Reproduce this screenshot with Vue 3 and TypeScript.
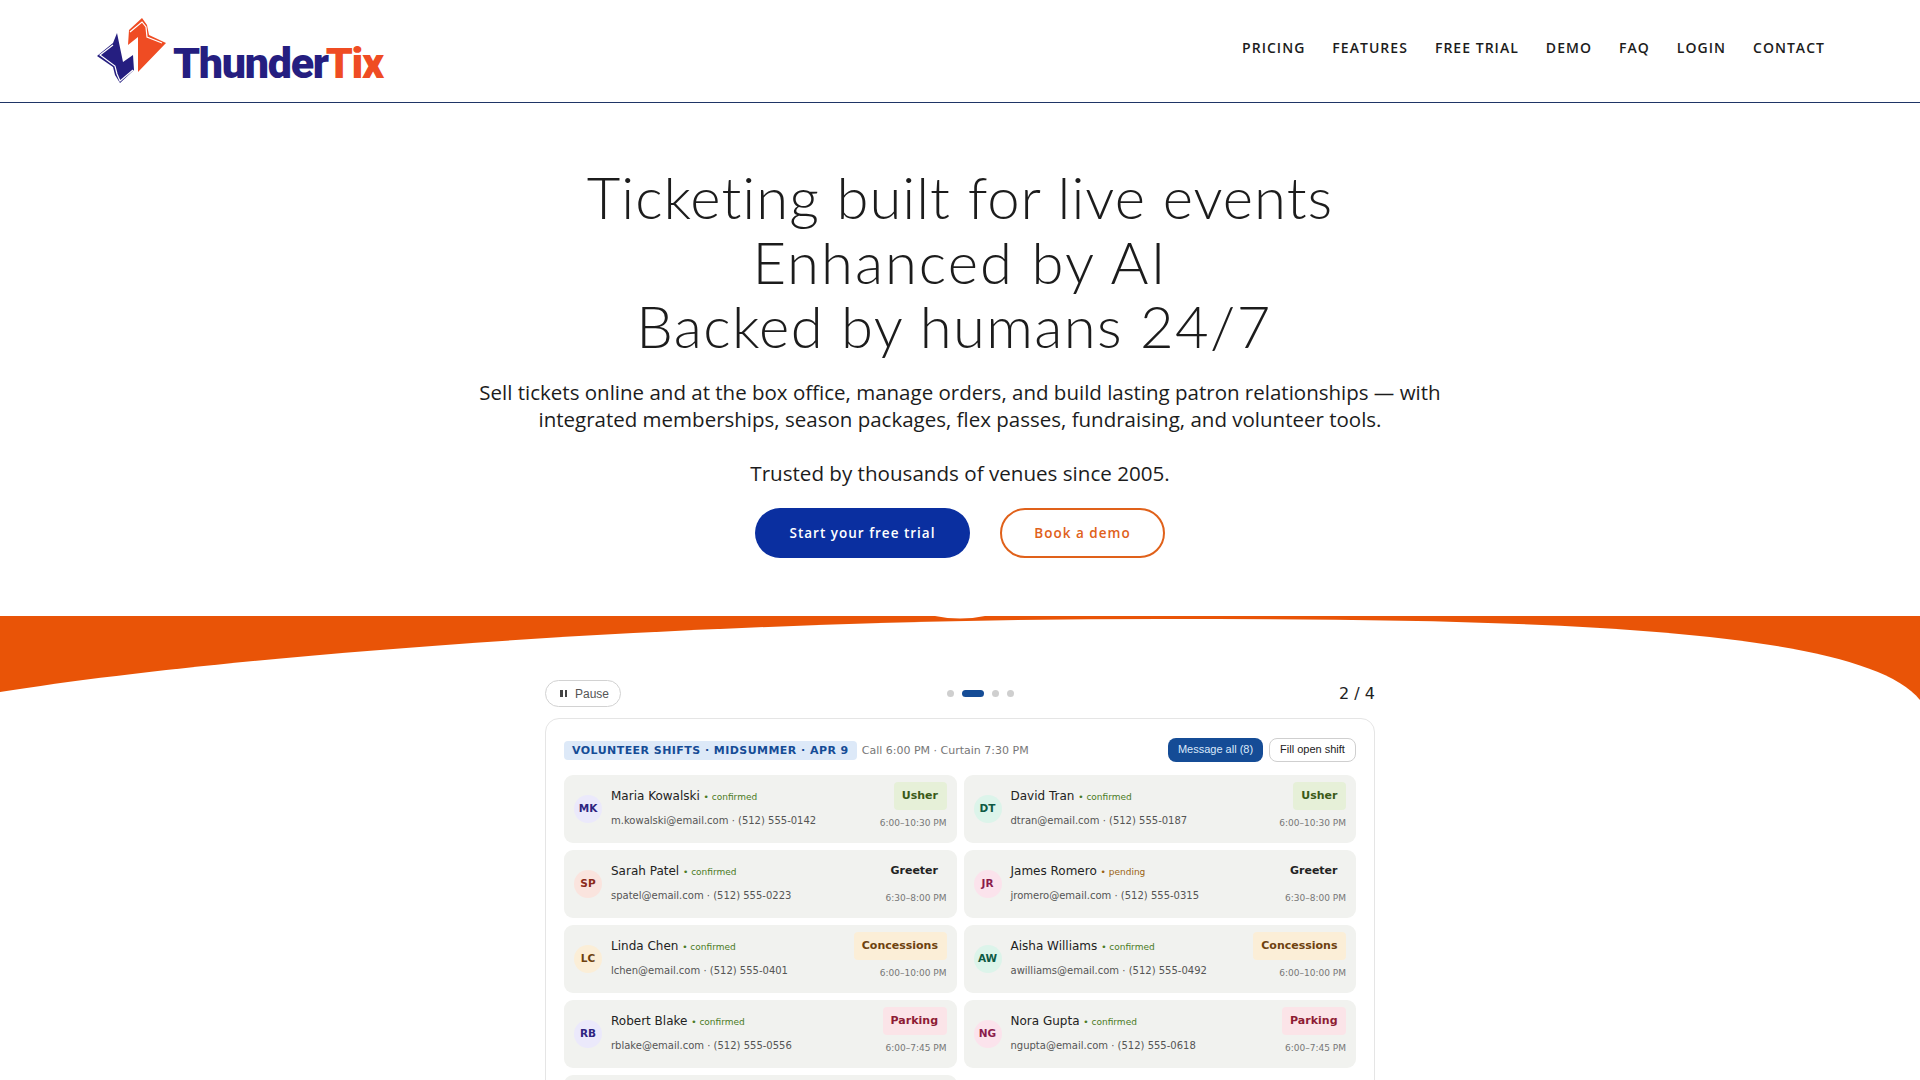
<script setup lang="ts">
interface Shift {
  initials: string
  name: string
  status: string
  contact: string
  role: string
  time: string
  tone: string
  avatar: string
}

const nav: string[] = ['PRICING', 'FEATURES', 'FREE TRIAL', 'DEMO', 'FAQ', 'LOGIN', 'CONTACT']

const shifts: Shift[] = [
  { initials: 'MK', name: 'Maria Kowalski', status: 'confirmed', contact: 'm.kowalski@email.com · (512) 555-0142', role: 'Usher', time: '6:00–10:30 PM', tone: 'usher', avatar: 'violet' },
  { initials: 'DT', name: 'David Tran', status: 'confirmed', contact: 'dtran@email.com · (512) 555-0187', role: 'Usher', time: '6:00–10:30 PM', tone: 'usher', avatar: 'mint' },
  { initials: 'SP', name: 'Sarah Patel', status: 'confirmed', contact: 'spatel@email.com · (512) 555-0223', role: 'Greeter', time: '6:30–8:00 PM', tone: 'greeter', avatar: 'coral' },
  { initials: 'JR', name: 'James Romero', status: 'pending', contact: 'jromero@email.com · (512) 555-0315', role: 'Greeter', time: '6:30–8:00 PM', tone: 'greeter', avatar: 'pink' },
  { initials: 'LC', name: 'Linda Chen', status: 'confirmed', contact: 'lchen@email.com · (512) 555-0401', role: 'Concessions', time: '6:00–10:00 PM', tone: 'concessions', avatar: 'sand' },
  { initials: 'AW', name: 'Aisha Williams', status: 'confirmed', contact: 'awilliams@email.com · (512) 555-0492', role: 'Concessions', time: '6:00–10:00 PM', tone: 'concessions', avatar: 'mint' },
  { initials: 'RB', name: 'Robert Blake', status: 'confirmed', contact: 'rblake@email.com · (512) 555-0556', role: 'Parking', time: '6:00–7:45 PM', tone: 'parking', avatar: 'violet' },
  { initials: 'NG', name: 'Nora Gupta', status: 'confirmed', contact: 'ngupta@email.com · (512) 555-0618', role: 'Parking', time: '6:00–7:45 PM', tone: 'parking', avatar: 'pink' },
]
</script>

<template>
  <div class="page">
    <header class="header">
      <a class="logo" href="#">
        <svg class="mark" viewBox="0 0 70 67" width="70" height="67" aria-hidden="true">
          <path d="M32 13 L45 1 L50 8 L52 18 L69 26 L41 55 L41 20 L31 28 Z" fill="#ef4c23"/>
          <path d="M33 15 L45 5 L49 10 L50 20 L65 26" fill="none" stroke="#fff" stroke-width="1.2"/>
          <path d="M20 16 L26 45 L36 38 L37 53 L23 66 L18 58 L16 50 L0 39 L16 26 Z" fill="#251e80"/>
          <path d="M16 28 L3 38 L18 49 L20 57 L23 64 L36 53" fill="none" stroke="#fff" stroke-width="1.2"/>
        </svg>
        <span class="word">Thunder<span class="word-accent">Tix</span></span>
      </a>
      <nav class="nav">
        <a v-for="item in nav" :key="item" href="#">{{ item }}</a>
      </nav>
    </header>

    <section class="hero">
      <h1>
        <span class="line">Ticketing built for live events</span>
        <span class="line second">Enhanced by AI</span>
        <span class="line third">Backed by humans 24/7</span>
      </h1>
      <p class="lead">Sell tickets online and at the box office, manage orders, and build lasting patron relationships — with<br />integrated memberships, season packages, flex passes, fundraising, and volunteer tools.</p>
      <p class="trust">Trusted by thousands of venues since 2005.</p>
      <div class="cta">
        <a class="btn primary" href="#">Start your free trial</a>
        <a class="btn outline" href="#">Book a demo</a>
      </div>
    </section>

    <section class="showcase">
      <svg class="wave" viewBox="0 0 1920 90" preserveAspectRatio="none" aria-hidden="true">
        <rect width="1920" height="90" fill="#e95407"/>
        <path d="M0 76 C240 38 700 3 1160 3 C1500 3 1860 8 1920 84 L1920 90 L0 90 Z" fill="#fff"/>
        <path d="M935 0 Q960 5 985 0 Z" fill="#fff"/>
      </svg>
      <div class="carousel">
        <div class="controls">
          <button class="pause"><span class="bars"><i></i><i></i></span>Pause</button>
          <div class="dots">
            <span class="dot"></span><span class="dot on"></span><span class="dot"></span><span class="dot"></span>
          </div>
          <span class="count">2 / 4</span>
        </div>
        <div class="card">
          <div class="card-head">
            <span class="tag">VOLUNTEER SHIFTS · MIDSUMMER · APR 9</span>
            <span class="call">Call 6:00 PM · Curtain 7:30 PM</span>
            <button class="act fill">Message all (8)</button>
            <button class="act ghost">Fill open shift</button>
          </div>
          <div class="grid">
            <div v-for="s in shifts" :key="s.initials" class="row">
              <span class="avatar" :class="s.avatar">{{ s.initials }}</span>
              <div class="info">
                <div class="name">{{ s.name }} <span class="status" :class="s.status">• {{ s.status }}</span></div>
                <div class="contact">{{ s.contact }}</div>
              </div>
              <div class="side">
                <span class="role" :class="s.tone">{{ s.role }}</span>
                <span class="time">{{ s.time }}</span>
              </div>
            </div>
            <div class="row"></div>
          </div>
        </div>
      </div>
    </section>
  </div>
</template>

<style>
html, body { margin: 0; background: #fff; }
</style>

<style scoped>
.page { height: 1080px; overflow: hidden; background: #fff; font-family: "Open Sans", sans-serif; color: #1c1c1c; }
a { text-decoration: none; }

.header { height: 103px; box-sizing: border-box; border-bottom: 1px solid #1f3566; display: flex; align-items: flex-start; justify-content: space-between; padding: 0 95px 0 97px; }
.logo { display: flex; align-items: flex-start; margin-top: 17px; }
.mark { display: block; }
.word { font-family: Roboto, sans-serif; font-weight: 900; font-size: 43px; line-height: 1; color: #251e80; letter-spacing: -1.3px; margin: 25px 0 0 6px; }
.word-accent { color: #ef4c23; margin-left: -2px; }
.nav { display: flex; gap: 27px; margin-top: 38px; }
.nav a { color: #1c1c1c; font-size: 14px; font-weight: 600; letter-spacing: 1.03px; line-height: 20px; white-space: nowrap; }

.hero { display: flex; flex-direction: column; align-items: center; text-align: center; padding-top: 62px; height: 513px; box-sizing: border-box; }
h1 { margin: 0; font-family: Lato, sans-serif; font-weight: 300; font-size: 58px; line-height: 64.5px; letter-spacing: 1px; color: #1c1c1c; }
.line { display: block; }
.second { letter-spacing: 2px; }
.third { letter-spacing: 1.35px; padding-right: 12px; }
.lead { margin: 20px 0 0; font-size: 20.5px; line-height: 27px; }
.trust { margin: 27px 0 0; font-size: 20.6px; line-height: 27px; }
.cta { display: flex; gap: 30px; margin-top: 21px; }
.btn { box-sizing: border-box; height: 50px; border-radius: 25px; display: flex; align-items: center; justify-content: center; font-size: 13.5px; font-weight: 600; letter-spacing: 1px; }
.primary { width: 215px; background: #0a2fa0; color: #fff; }
.outline { width: 165px; border: 2px solid #e0611a; color: #e0611a; }

.showcase { position: relative; height: 464px; padding-top: 64px; box-sizing: border-box; }
.wave { position: absolute; left: 0; top: 0; width: 100%; height: 90px; display: block; }
.carousel { position: relative; width: 830px; margin: 0 auto; }
.controls { display: flex; justify-content: space-between; align-items: center; height: 27px; }
.pause { width: 76px; height: 27px; box-sizing: border-box; border: 1px solid #d2d2d2; border-radius: 14px; background: #fff; display: flex; align-items: center; gap: 8px; font-family: "Liberation Sans", sans-serif; font-size: 12px; color: #555; padding: 0 0 0 14px; }
.bars { display: flex; gap: 2px; }
.bars i { width: 2.5px; height: 7px; background: #444; display: block; }
.dots { display: flex; align-items: center; gap: 8px; }
.dot { width: 7px; height: 7px; border-radius: 50%; background: #cfcfcf; }
.dot.on { width: 22px; height: 7px; border-radius: 4px; background: #154c96; }
.count { font-family: "DejaVu Sans", sans-serif; font-size: 16px; color: #222; }

.card { margin-top: 11px; height: 480px; box-sizing: border-box; border: 1px solid #e5e5e5; border-radius: 14px; padding: 19px 18px 0; background: #fff; font-family: "DejaVu Sans", sans-serif; }
.card-head { display: flex; align-items: center; height: 24px; margin-bottom: 13px; }
.tag { background: #dde9f8; color: #154c96; font-size: 11px; font-weight: 700; letter-spacing: 0.45px; line-height: 19px; padding: 0 8px; border-radius: 4px; white-space: nowrap; }
.call { margin-left: 5px; font-size: 11px; color: #777; flex: 1; white-space: nowrap; }
.act { font-family: "Liberation Sans", sans-serif; font-size: 11px; height: 24px; box-sizing: border-box; border-radius: 8px; padding: 0 0 2px; }
.fill { width: 95px; background: #154c96; color: #dbe9fb; border: 0; }
.ghost { width: 87px; margin-left: 6px; background: #fff; color: #222; border: 1px solid #cfcfcf; }

.grid { display: grid; grid-template-columns: 1fr 1fr; gap: 7px; }
.row { height: 68px; box-sizing: border-box; background: #f1f2ef; border-radius: 9px; padding: 0 10px; display: flex; align-items: center; }
.avatar { width: 28px; height: 28px; box-sizing: border-box; padding-bottom: 3px; border-radius: 50%; flex: none; display: flex; align-items: center; justify-content: center; font-size: 10.5px; font-weight: 700; margin-right: 9px; }
.violet { background: #ebe9fb; color: #2e2480; }
.mint { background: #dcf4ea; color: #0e5a44; }
.coral { background: #fae4de; color: #8a2a1a; }
.pink { background: #fbe3ec; color: #8a1c4c; }
.sand { background: #fbeed7; color: #6e4210; }
.info { flex: 1; min-width: 0; margin-top: -2px; }
.name { font-size: 12px; line-height: 16px; color: #222; white-space: nowrap; }
.status { font-size: 9px; }
.confirmed { color: #4a7a24; }
.pending { color: #9a6214; }
.contact { margin-top: 9px; font-size: 10px; line-height: 14px; color: #555; white-space: nowrap; }
.side { display: flex; flex-direction: column; align-items: flex-end; align-self: flex-start; margin-top: 7px; }
.role { font-size: 11px; font-weight: 700; line-height: 28px; padding: 0 8.5px 0 8px; border-radius: 4px; white-space: nowrap; }
.usher { background: #e6f0d8; color: #3a5a18; }
.greeter { color: #222; }
.concessions { background: #fbeed7; color: #6e4210; }
.parking { background: #fbe4e8; color: #8e1c34; }
.time { font-size: 9px; line-height: 14px; margin-top: 6px; color: #777; }
</style>
